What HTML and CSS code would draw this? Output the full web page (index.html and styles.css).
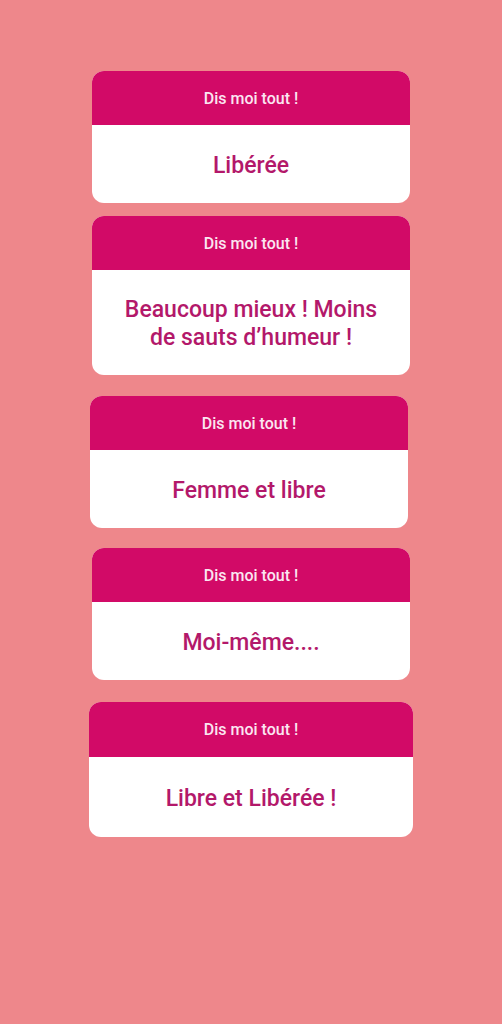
FILE: index.html
```html
<!DOCTYPE html>
<html lang="fr">
<head>
<meta charset="utf-8">
<title>Dis moi tout !</title>
<link rel="stylesheet" href="styles.css">
</head>
<body>
<main class="page">
  <section class="card card-a">
    <header class="card-head">Dis moi tout !</header>
    <div class="card-body">Libérée</div>
  </section>
  <section class="card card-b">
    <header class="card-head">Dis moi tout !</header>
    <div class="card-body card-body-tall">Beaucoup mieux ! Moins<br>de sauts d’humeur !</div>
  </section>
  <section class="card card-c">
    <header class="card-head">Dis moi tout !</header>
    <div class="card-body">Femme et libre</div>
  </section>
  <section class="card card-d">
    <header class="card-head">Dis moi tout !</header>
    <div class="card-body">Moi-même....</div>
  </section>
  <section class="card card-e">
    <header class="card-head">Dis moi tout !</header>
    <div class="card-body card-body-e">Libre et Libérée !</div>
  </section>
</main>
</body>
</html>
```
FILE: styles.css
```css
html, body {
  margin: 0;
  padding: 0;
  background: #ee878b;
}
body {
  width: 502px;
  height: 1024px;
  overflow: hidden;
  font-family: Roboto, "Noto Sans", "Liberation Sans", sans-serif;
}
.page {
  display: flex;
  flex-direction: column;
  align-items: flex-start;
  padding-top: 71px;
}
.card {
  width: 318px;
  margin-left: 92px;
  border-radius: 12px;
  overflow: hidden;
  background: #ffffff;
}
.card-head {
  height: 54px;
  background: #d20a67;
  color: #fbe6f1;
  font-size: 16px;
  font-weight: 500;
  display: flex;
  align-items: center;
  justify-content: center;
}
.card-body {
  box-sizing: border-box;
  height: 78px;
  padding-top: 4px;
  display: flex;
  align-items: center;
  justify-content: center;
  text-align: center;
  color: #b3186a;
  font-size: 23px;
  font-weight: 500;
  line-height: 28px;
}
.card-body-tall {
  height: 105px;
  padding-top: 2px;
}
.card-b { margin-top: 13px; }
.card-c { margin-top: 21px; margin-left: 90px; }
.card-d { margin-top: 20px; }
.card-e { margin-top: 22px; margin-left: 89px; width: 324px; }
.card-e .card-head { height: 55px; }
.card-body-e { height: 80px; }
```
